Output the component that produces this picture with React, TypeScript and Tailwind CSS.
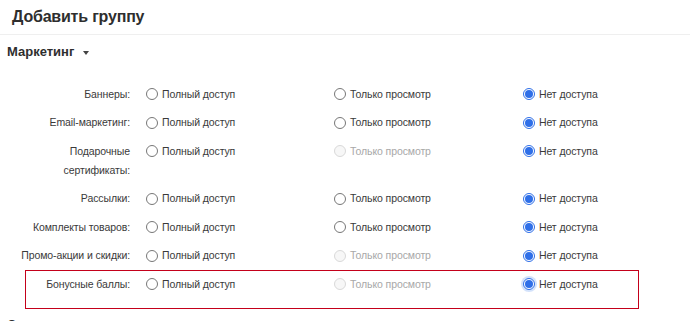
import React from "react";

type Row = { label: string[]; viewDisabled?: boolean; focus?: boolean };

const rows: Row[] = [
  { label: ["Баннеры:"] },
  { label: ["Email-маркетинг:"] },
  { label: ["Подарочные", "сертификаты:"], viewDisabled: true },
  { label: ["Рассылки:"] },
  { label: ["Комплекты товаров:"] },
  { label: ["Промо-акции и скидки:"], viewDisabled: true },
  { label: ["Бонусные баллы:"], viewDisabled: true, focus: true },
];

function Radio({
  text,
  checked,
  disabled,
  focus,
}: {
  text: string;
  checked?: boolean;
  disabled?: boolean;
  focus?: boolean;
}) {
  return (
    <label className="flex items-center gap-[4px] h-[19px]">
      {checked ? (
        <span
          className={
            "w-[12px] h-[12px] rounded-full border border-[#2f6fe8] bg-white flex items-center justify-center shrink-0 " +
            (focus ? "shadow-[0_0_0_2px_rgba(80,140,240,0.25)]" : "")
          }
        >
          <span className="w-[8px] h-[8px] rounded-full bg-[#2f6fe8]" />
        </span>
      ) : disabled ? (
        <span className="w-[12px] h-[12px] rounded-full border border-[#d9d9d9] bg-[#f7f7f7] shrink-0" />
      ) : (
        <span className="w-[12px] h-[12px] rounded-full border border-[#777] bg-white shrink-0" />
      )}
      <span className={disabled ? "text-[#a8a8a8]" : "text-[#3a3a3a]"}>{text}</span>
    </label>
  );
}

export default function App() {
  return (
    <div
      className="relative w-[690px] h-[321px] overflow-hidden bg-white text-[#333]"
      style={{ fontFamily: '"Liberation Sans", Arial, sans-serif' }}
    >
      <div className="h-[35px] border-b border-[#efefef] px-[12px] flex items-center">
        <h1 className="text-[16px] font-bold text-[#2e2e2e] leading-[22px] tracking-[-0.2px]">
          Добавить группу
        </h1>
      </div>

      <div className="mt-[7px] pl-[7px] flex items-center gap-[9px] h-[20px]">
        <span className="text-[13px] font-bold text-[#2e2e2e]">Маркетинг</span>
        <span className="w-0 h-0 border-l-[3px] border-r-[3px] border-t-[4px] border-l-transparent border-r-transparent border-t-[#444] mt-[1px]" />
      </div>

      <div className="mt-[22.5px] grid grid-cols-[146px_188px_189px_1fr] gap-y-[9.5px] text-[10.5px] leading-[19px] tracking-[-0.1px]">
        {rows.map((r, i) => (
          <React.Fragment key={i}>
            <div className="pr-[16px] text-right text-[#3a3a3a]">
              {r.label.map((l, j) => (
                <div key={j}>{l}</div>
              ))}
            </div>
            <Radio text="Полный доступ" />
            <Radio text="Только просмотр" disabled={r.viewDisabled} />
            <Radio text="Нет доступа" checked focus={r.focus} />
          </React.Fragment>
        ))}
      </div>

      <div className="mt-[21.5px] pl-[7px] h-[20px] text-[13px] leading-[20px] font-bold text-[#2e2e2e]">
        Склад
      </div>

      <div className="absolute left-[25px] top-[270px] w-[614px] h-[39px] border-[1.5px] border-[#c4001a] pointer-events-none" />
    </div>
  );
}
